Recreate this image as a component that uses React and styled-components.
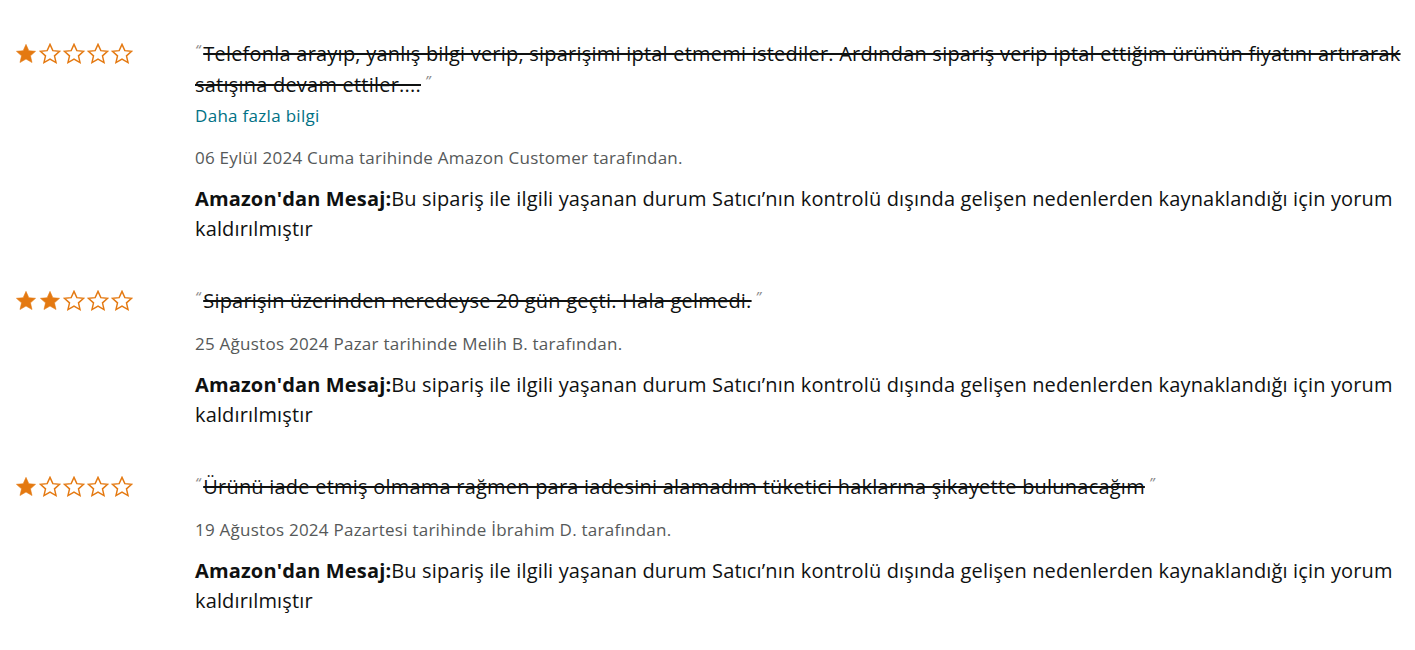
import styled, { createGlobalStyle } from 'styled-components';

const GlobalStyle = createGlobalStyle`
  body {
    margin: 0;
    background: #fff;
    font-family: "Open Sans", "Noto Sans", sans-serif;
    color: #0f1111;
  }
`;

const reviews = [
  {
    rating: 1,
    text: 'Telefonla arayıp, yanlış bilgi verip, siparişimi iptal etmemi istediler. Ardından sipariş verip iptal ettiğim ürünün fiyatını artırarak satışına devam ettiler....',
    more: true,
    meta: '06 Eylül 2024 Cuma tarihinde Amazon Customer tarafından.',
  },
  {
    rating: 2,
    text: 'Siparişin üzerinden neredeyse 20 gün geçti. Hala gelmedi.',
    meta: '25 Ağustos 2024 Pazar tarihinde Melih B. tarafından.',
  },
  {
    rating: 1,
    text: 'Ürünü iade etmiş olmama rağmen para iadesini alamadım tüketici haklarına şikayette bulunacağım',
    meta: '19 Ağustos 2024 Pazartesi tarihinde İbrahim D. tarafından.',
  },
];

const MESSAGE =
  'Bu sipariş ile ilgili yaşanan durum Satıcı’nın kontrolü dışında gelişen nedenlerden kaynaklandığı için yorum kaldırılmıştır';

const Page = styled.div`
  padding: 39px 8px 40px 15px;
`;

const Review = styled.div`
  display: grid;
  grid-template-columns: 180px 1fr;
  & + & {
    margin-top: 42px;
  }
`;

const Stars = styled.div`
  display: flex;
  gap: 2px;
  padding-top: 4px;
`;

const Body = styled.div`
  min-width: 0;
`;

const Quote = styled.div`
  font-size: 20px;
  line-height: 30px;
  letter-spacing: 0.22px;
  color: #0f1111;
`;

const Mark = styled.span`
  position: relative;
  top: -6px;
  font-size: 15px;
  color: #888;
  font-style: italic;
  letter-spacing: 0;
  margin-right: ${(p) => (p.$open ? '3px' : '0')};
  margin-left: ${(p) => (p.$open ? '0' : '4px')};
`;

const Struck = styled.span`
  text-decoration: line-through;
  text-decoration-thickness: 2px;
`;

const More = styled.a`
  display: block;
  font-size: 17px;
  line-height: 30px;
  letter-spacing: 0.3px;
  color: #007185;
  text-decoration: none;
`;

const Meta = styled.div`
  margin-top: 17px;
  font-size: 17px;
  line-height: 20px;
  letter-spacing: 0.25px;
  color: #565959;
`;

const Message = styled.div`
  margin-top: 16px;
  font-size: 20px;
  line-height: 30px;
  letter-spacing: 0.15px;
  b {
    font-weight: 700;
  }
`;

const Star = ({ filled }) => (
  <svg width="22" height="21" viewBox="0 0 24 23">
    <path
      d="M12 1.5l3.1 6.9 7.4.7-5.6 5 1.7 7.3L12 17.6l-6.6 3.8 1.7-7.3-5.6-5 7.4-.7z"
      fill={filled ? '#e47911' : '#fff'}
      stroke="#e47911"
      strokeWidth={filled ? 0.6 : 1.6}
      strokeLinejoin="miter"
    />
  </svg>
);

const Rating = ({ value }) => (
  <Stars>
    {[0, 1, 2, 3, 4].map((i) => (
      <Star key={i} filled={i < value} />
    ))}
  </Stars>
);

const App = () => (
  <Page>
    <GlobalStyle />
    {reviews.map((r, i) => (
      <Review key={i}>
        <Rating value={r.rating} />
        <Body>
          <Quote>
            <Mark $open>“</Mark>
            <Struck>{r.text}</Struck>
            <Mark>”</Mark>
          </Quote>
          {r.more && <More href="#">Daha fazla bilgi</More>}
          <Meta>{r.meta}</Meta>
          <Message>
            <b>Amazon'dan Mesaj:</b>
            {MESSAGE}
          </Message>
        </Body>
      </Review>
    ))}
  </Page>
);

export default App;
